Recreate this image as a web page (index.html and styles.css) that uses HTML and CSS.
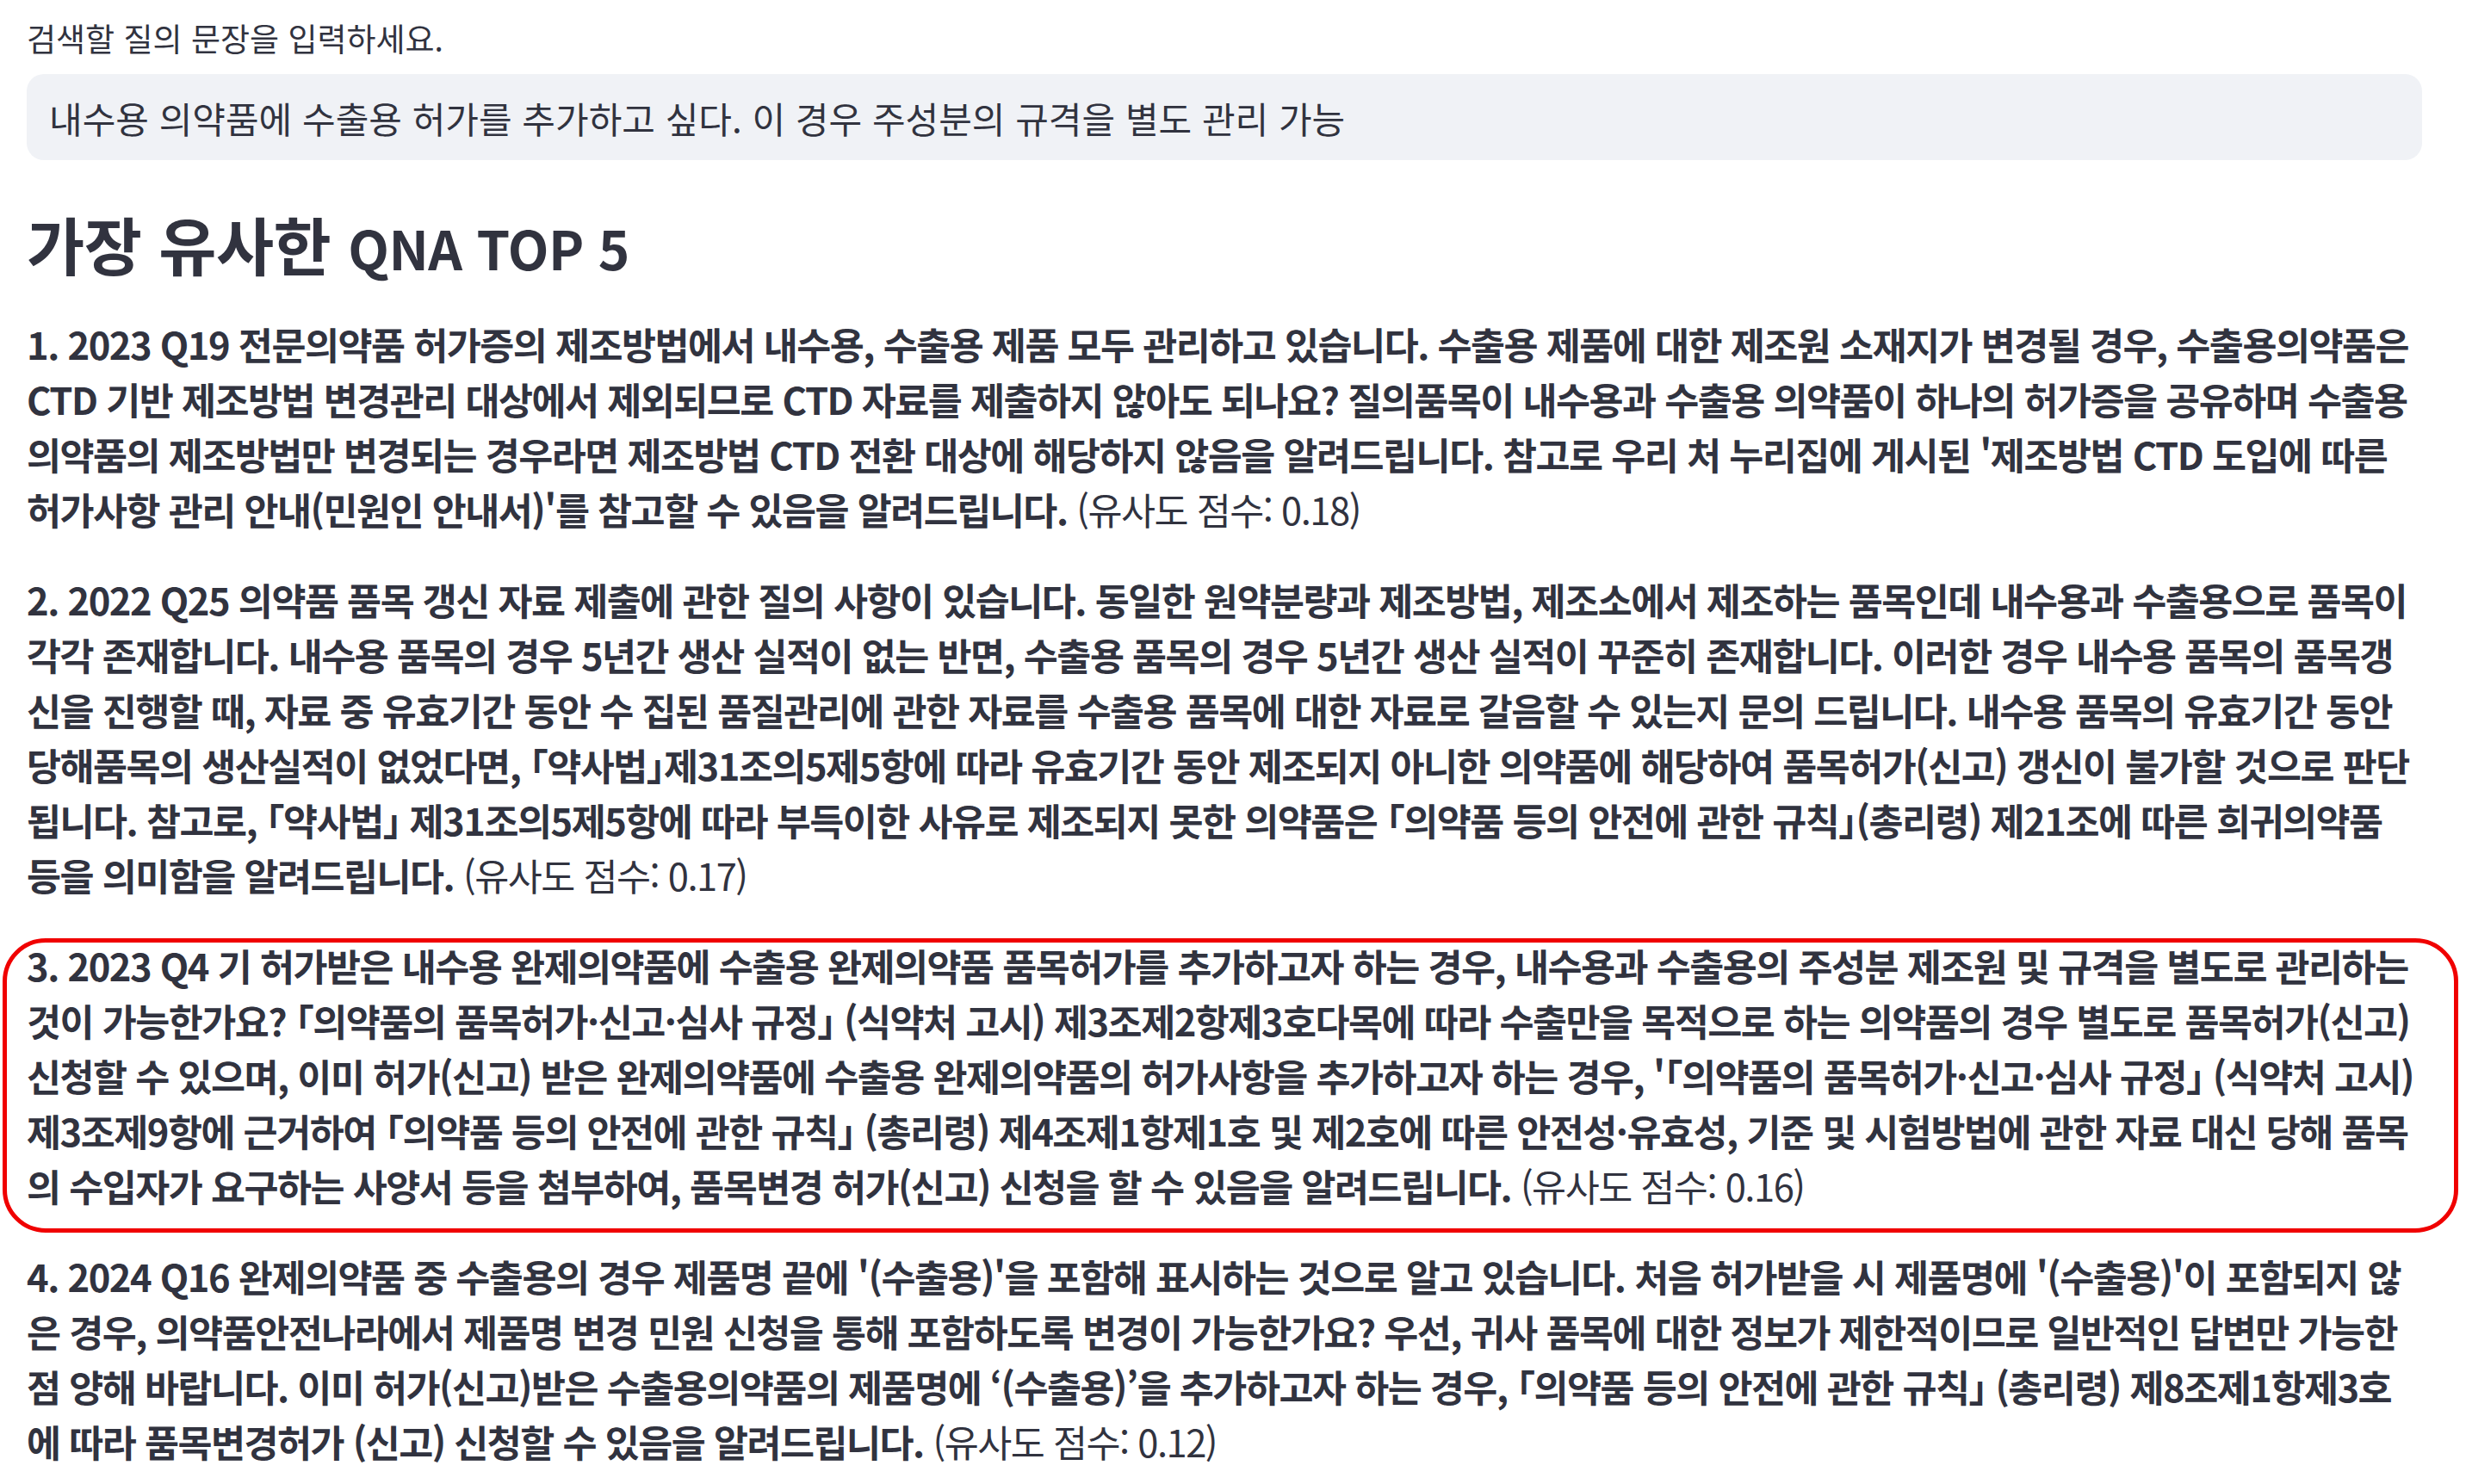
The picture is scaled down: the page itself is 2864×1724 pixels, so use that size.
FILE: index.html
```html
<!DOCTYPE html>
<html lang="ko">
<head>
<meta charset="utf-8">
<title>QNA 검색</title>
<link rel="stylesheet" href="styles.css">
</head>
<body>
<main class="page">
  <label class="field-label" for="q">검색할 질의 문장을 입력하세요.</label>
  <div class="input-box" id="q">내수용 의약품에 수출용 허가를 추가하고 싶다. 이 경우 주성분의 규격을 별도 관리 가능</div>

  <h3 class="section-title">가장 유사한 <span class="title-latin">QNA TOP 5</span></h3>

  <p class="result"><strong>1. 2023 Q19 전문의약품 허가증의 제조방법에서 내수용, 수출용 제품 모두 관리하고 있습니다. 수출용 제품에 대한 제조원 소재지가 변경될 경우, 수출용의약품은 CTD 기반 제조방법 변경관리 대상에서 제외되므로 CTD 자료를 제출하지 않아도 되나요? 질의품목이 내수용과 수출용 의약품이 하나의 허가증을 공유하며 수출용 의약품의 제조방법만 변경되는 경우라면 제조방법 CTD 전환 대상에 해당하지 않음을 알려드립니다. 참고로 우리 처 누리집에 게시된 '제조방법 CTD 도입에 따른 허가사항 관리 안내(민원인 안내서)'를 참고할 수 있음을 알려드립니다.</strong> <span class="score">(유사도 점수: 0.18)</span></p>

  <p class="result"><strong>2. 2022 Q25 의약품 품목 갱신 자료 제출에 관한 질의 사항이 있습니다. 동일한 원약분량과 제조방법, 제조소에서 제조하는 품목인데 내수용과 수출용으로 품목이 각각 존재합니다. 내수용 품목의 경우 5년간 생산 실적이 없는 반면, 수출용 품목의 경우 5년간 생산 실적이 꾸준히 존재합니다. 이러한 경우 내수용 품목의 품목갱신을 진행할 때, 자료 중 유효기간 동안 수 집된 품질관리에 관한 자료를 수출용 품목에 대한 자료로 갈음할 수 있는지 문의 드립니다. 내수용 품목의 유효기간 동안 당해품목의 생산실적이 없었다면, 「약사법」제31조의5제5항에 따라 유효기간 동안 제조되지 아니한 의약품에 해당하여 품목허가(신고) 갱신이 불가할 것으로 판단됩니다. 참고로, 「약사법」 제31조의5제5항에 따라 부득이한 사유로 제조되지 못한 의약품은 「의약품 등의 안전에 관한 규칙」(총리령) 제21조에 따른 희귀의약품 등을 의미함을 알려드립니다.</strong> <span class="score">(유사도 점수: 0.17)</span></p>

  <p class="result result--marked"><strong>3. 2023 Q4 기 허가받은 내수용 완제의약품에 수출용 완제의약품 품목허가를 추가하고자 하는 경우, 내수용과 수출용의 주성분 제조원 및 규격을 별도로 관리하는 것이 가능한가요? 「의약품의 품목허가·신고·심사 규정」 (식약처 고시) 제3조제2항제3호다목에 따라 수출만을 목적으로 하는 의약품의 경우 별도로 품목허가(신고) 신청할 수 있으며, 이미 허가(신고) 받은 완제의약품에 수출용 완제의약품의 허가사항을 추가하고자 하는 경우, '「의약품의 품목허가·신고·심사 규정」 (식약처 고시) 제3조제9항에 근거하여 「의약품 등의 안전에 관한 규칙」 (총리령) 제4조제1항제1호 및 제2호에 따른 안전성·유효성, 기준 및 시험방법에 관한 자료 대신 당해 품목의 수입자가 요구하는 사양서 등을 첨부하여, 품목변경 허가(신고) 신청을 할 수 있음을 알려드립니다.</strong> <span class="score">(유사도 점수: 0.16)</span></p>

  <p class="result"><strong>4. 2024 Q16 완제의약품 중 수출용의 경우 제품명 끝에 '(수출용)'을 포함해 표시하는 것으로 알고 있습니다. 처음 허가받을 시 제품명에 '(수출용)'이 포함되지 않은 경우, 의약품안전나라에서 제품명 변경 민원 신청을 통해 포함하도록 변경이 가능한가요? 우선, 귀사 품목에 대한 정보가 제한적이므로 일반적인 답변만 가능한 점 양해 바랍니다. 이미 허가(신고)받은 수출용의약품의 제품명에 ‘(수출용)’을 추가하고자 하는 경우, 「의약품 등의 안전에 관한 규칙」 (총리령) 제8조제1항제3호에 따라 품목변경허가 (신고) 신청할 수 있음을 알려드립니다.</strong> <span class="score">(유사도 점수: 0.12)</span></p>
</main>
</body>
</html>
```

FILE: styles.css
```css
html, body {
  margin: 0;
  padding: 0;
  background: #ffffff;
}

body {
  font-family: "Noto Sans CJK KR", "Noto Sans", sans-serif;
  color: rgb(49, 51, 63);
  overflow: hidden;
}

.page {
  padding: 19px 51px 0 31px;
}

.field-label {
  display: block;
  font-size: 37px;
  line-height: 50px;
  font-weight: 400;
}

.input-box {
  margin-top: 17px;
  height: 100px;
  box-sizing: border-box;
  padding: 0 26px;
  display: flex;
  align-items: center;
  background: #f0f2f6;
  border-radius: 20px;
  font-size: 42px;
  white-space: nowrap;
  overflow: hidden;
}

.section-title {
  margin: 55px 0 40px;
  font-size: 73px;
  line-height: 82px;
  font-weight: 700;
  letter-spacing: -0.5px;
}

.title-latin {
  font-size: 62px;
  font-weight: 600;
}

.result {
  margin: 0 0 41px;
  font-size: 43.5px;
  line-height: 64px;
  letter-spacing: -1.5px;
  font-feature-settings: "halt";
}

.result strong {
  font-weight: 600;
}

.score {
  font-weight: 400;
}

.result--marked {
  position: relative;
}

.result--marked::after {
  content: "";
  position: absolute;
  top: 0;
  left: -28px;
  right: -42px;
  bottom: -22px;
  border: 5px solid #f00000;
  border-radius: 50px;
  pointer-events: none;
}
```
